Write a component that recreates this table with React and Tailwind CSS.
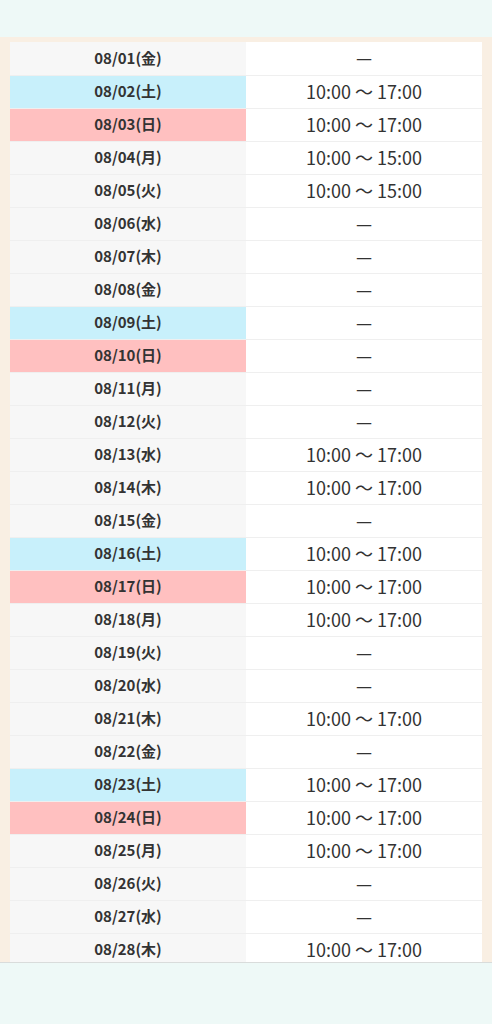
import React from 'react';

const DAYS = ['日', '月', '火', '水', '木', '金', '土'];
const OPEN = '10:00 ～ 17:00';
const SHORT = '10:00 ～ 15:00';

// 2025/08/01 is a Friday
const HOURS = {
  2: OPEN, 3: OPEN, 4: SHORT, 5: SHORT,
  13: OPEN, 14: OPEN, 16: OPEN, 17: OPEN, 18: OPEN,
  21: OPEN, 23: OPEN, 24: OPEN, 25: OPEN, 28: OPEN,
};

const rows = Array.from({ length: 28 }, (_, i) => {
  const d = i + 1;
  const dow = (d + 4) % 7;
  return {
    label: `08/${String(d).padStart(2, '0')}(${DAYS[dow]})`,
    dow,
    hours: HOURS[d] || '—',
  };
});

export default function App() {
  return (
    <div className="min-h-[1024px] bg-[#eef9f7] font-['Noto_Sans_CJK_JP','Noto_Sans',sans-serif] text-[#333]">
      <div className="h-[37px]" />
      <div className="h-[926px] overflow-hidden bg-[#f9efe3] px-[10px] pt-[5px] border-b border-[#d9dcdb]">
        <table className="w-full border-collapse">
          <tbody>
            {rows.map(r => (
              <tr key={r.label} className="h-[33px] border-b border-[#efefef]">
                <td
                  className={`w-[236px] text-center text-[15px] font-bold p-0 ${
                    r.dow === 6 ? 'bg-[#c8f0fb]' : r.dow === 0 ? 'bg-[#ffc0c0]' : 'bg-[#f7f7f7]'
                  }`}
                >
                  {r.label}
                </td>
                <td className="bg-white text-center text-[18px] text-[#333] p-0 pb-[2px] leading-none">{r.hours}</td>
              </tr>
            ))}
          </tbody>
        </table>
      </div>
    </div>
  );
}
